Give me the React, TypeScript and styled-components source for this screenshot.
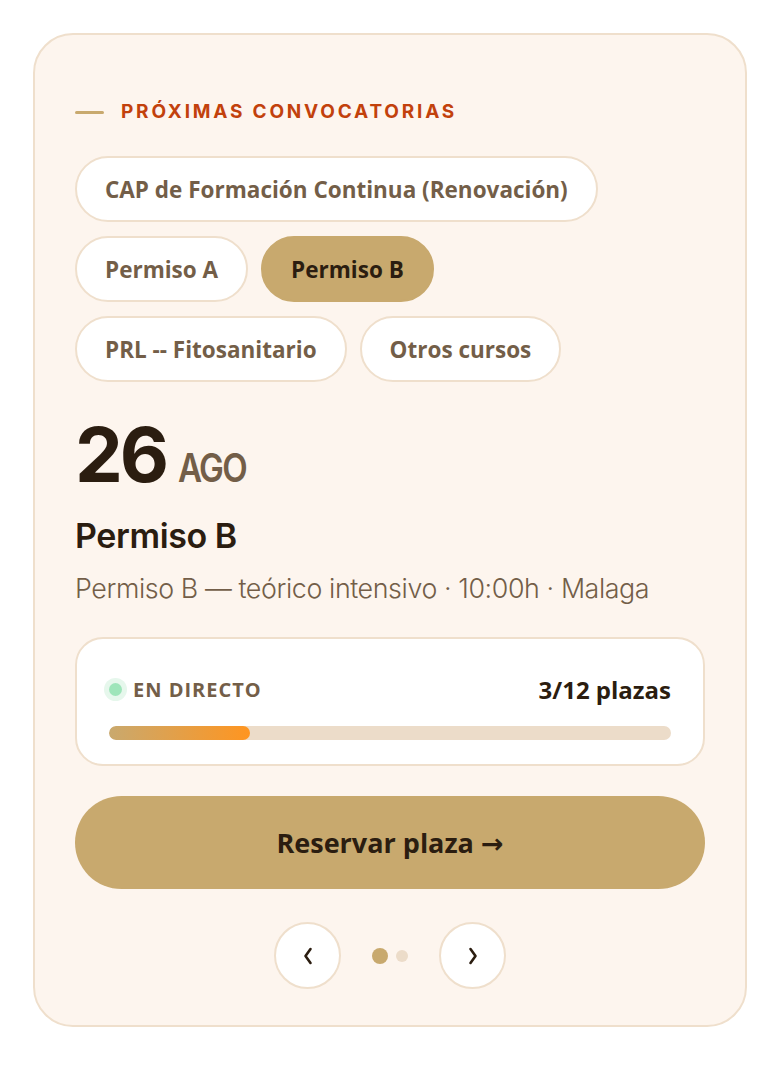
import React from "react";
import styled, { createGlobalStyle } from "styled-components";

const GlobalStyle = createGlobalStyle`
  body {
    margin: 0;
    background: #ffffff;
    font-family: "Open Sans", "Liberation Sans", sans-serif;
  }
`;

const Page = styled.div`
  padding: 33px;
`;

const Card = styled.section`
  box-sizing: border-box;
  width: 714px;
  background: #fdf5ee;
  border: 2px solid #efdfcc;
  border-radius: 40px;
  padding: 66px 40px 36px;
  display: flex;
  flex-direction: column;
`;

const Eyebrow = styled.div`
  display: flex;
  align-items: center;
  gap: 17px;
  font-family: "Inter", sans-serif;
  font-weight: 700;
  font-size: 19px;
  line-height: 22px;
  letter-spacing: 2.8px;
  color: #c2410c;
`;

const Dash = styled.span`
  width: 29px;
  height: 3px;
  border-radius: 2px;
  background: #c8a96e;
`;

const Chips = styled.div`
  display: flex;
  flex-wrap: wrap;
  gap: 14px 13px;
  margin-top: 33px;
`;

const Chip = styled.button<{ $active?: boolean }>`
  box-sizing: border-box;
  height: 66px;
  padding: 0 28px;
  border-radius: 33px;
  border: 2px solid ${(p) => (p.$active ? "#c8a96e" : "#efdfcc")};
  background: ${(p) => (p.$active ? "#c8a96e" : "#ffffff")};
  color: ${(p) => (p.$active ? "#2b1d10" : "#735e48")};
  font-family: "Open Sans", sans-serif;
  font-weight: 700;
  font-size: 22.5px;
  cursor: pointer;
`;

const DateRow = styled.div`
  display: flex;
  align-items: baseline;
  gap: 12px;
  margin-top: 34px;
  font-family: "Inter", sans-serif;
`;

const Day = styled.span`
  font-size: 76px;
  font-weight: 700;
  line-height: 1;
  letter-spacing: -3px;
  color: #2b1d10;
`;

const Month = styled.span`
  font-size: 39px;
  font-weight: 600;
  letter-spacing: -2px;
  color: #735e48;
  transform: scaleX(0.85);
  transform-origin: left;
`;

const Title = styled.h2`
  margin: 24px 0 0;
  font-family: "Inter", sans-serif;
  font-size: 34px;
  line-height: 40px;
  font-weight: 600;
  letter-spacing: -0.4px;
  color: #2b1d10;
`;

const Desc = styled.p`
  margin: 16px 0 0;
  font-family: "Inter", sans-serif;
  font-weight: 300;
  font-size: 26.8px;
  line-height: 32px;
  letter-spacing: -0.4px;
  color: #735e48;
`;

const Status = styled.div`
  box-sizing: border-box;
  margin-top: 33px;
  height: 129px;
  background: #ffffff;
  border: 2px solid #efdfcc;
  border-radius: 28px;
  padding: 34px 32px 0;
  display: flex;
  flex-direction: column;
  gap: 20px;
`;

const StatusRow = styled.div`
  display: flex;
  align-items: center;
  justify-content: space-between;
`;

const Live = styled.div`
  display: flex;
  align-items: center;
  gap: 11px;
  font-family: "Open Sans", sans-serif;
  font-weight: 700;
  font-size: 20px;
  letter-spacing: 1px;
  color: #735e48;
`;

const LiveDot = styled.span`
  width: 13px;
  height: 13px;
  border-radius: 50%;
  background: #9ee5ba;
  box-shadow: 0 0 0 5px #e6f7ec;
`;

const Seats = styled.span`
  font-family: "Open Sans", sans-serif;
  font-weight: 700;
  font-size: 24px;
  color: #2b1d10;
`;

const Track = styled.div`
  height: 14px;
  border-radius: 7px;
  background: #ecdcc9;
  overflow: hidden;
`;

const Fill = styled.div`
  height: 100%;
  border-radius: 7px;
  background: linear-gradient(90deg, #c9a96e, #ff9520);
`;

const Reserve = styled.button`
  margin-top: 30px;
  height: 93px;
  border: none;
  border-radius: 47px;
  background: #c8a96e;
  color: #2b1d10;
  font-family: "Open Sans", "DejaVu Sans", sans-serif;
  font-weight: 700;
  font-size: 27px;
  cursor: pointer;
`;

const Nav = styled.div`
  margin-top: 33px;
  display: flex;
  align-items: center;
  justify-content: center;
  gap: 31px;
`;

const Arrow = styled.button`
  box-sizing: border-box;
  width: 67px;
  height: 67px;
  border-radius: 50%;
  border: 2px solid #efdfcc;
  background: #ffffff;
  color: #2b1d10;
  display: flex;
  align-items: center;
  justify-content: center;
  padding: 0;
  cursor: pointer;
`;

const Dots = styled.div`
  display: flex;
  align-items: center;
  gap: 8px;
`;

const Dot = styled.span<{ $active?: boolean }>`
  width: ${(p) => (p.$active ? 16 : 12)}px;
  height: ${(p) => (p.$active ? 16 : 12)}px;
  border-radius: 50%;
  background: ${(p) => (p.$active ? "#c8a96e" : "#ecdcc9")};
`;

const Chevron: React.FC<{ dir: "left" | "right" }> = ({ dir }) => (
  <svg width="10" height="18" viewBox="0 0 10 18" fill="none">
    <polyline
      points={dir === "left" ? "7.5,2 2.5,9 7.5,16" : "2.5,2 7.5,9 2.5,16"}
      stroke="currentColor"
      strokeWidth="2.6"
      strokeLinecap="round"
      strokeLinejoin="round"
    />
  </svg>
);

const courses = [
  "CAP de Formación Continua (Renovación)",
  "Permiso A",
  "Permiso B",
  "PRL -- Fitosanitario",
  "Otros cursos",
];

const App: React.FC = () => {
  const taken = 3;
  const total = 12;
  return (
    <Page>
      <GlobalStyle />
      <Card>
        <Eyebrow>
          <Dash />
          PRÓXIMAS CONVOCATORIAS
        </Eyebrow>
        <Chips>
          {courses.map((c) => (
            <Chip key={c} $active={c === "Permiso B"}>
              {c}
            </Chip>
          ))}
        </Chips>
        <DateRow>
          <Day>26</Day>
          <Month>AGO</Month>
        </DateRow>
        <Title>Permiso B</Title>
        <Desc>Permiso B — teórico intensivo · 10:00h · Malaga</Desc>
        <Status>
          <StatusRow>
            <Live>
              <LiveDot />
              EN DIRECTO
            </Live>
            <Seats>
              {taken}/{total} plazas
            </Seats>
          </StatusRow>
          <Track>
            <Fill style={{ width: `${(taken / total) * 100}%` }} />
          </Track>
        </Status>
        <Reserve>Reservar plaza →</Reserve>
        <Nav>
          <Arrow aria-label="Anterior">
            <Chevron dir="left" />
          </Arrow>
          <Dots>
            <Dot $active />
            <Dot />
          </Dots>
          <Arrow aria-label="Siguiente">
            <Chevron dir="right" />
          </Arrow>
        </Nav>
      </Card>
    </Page>
  );
};

export default App;
